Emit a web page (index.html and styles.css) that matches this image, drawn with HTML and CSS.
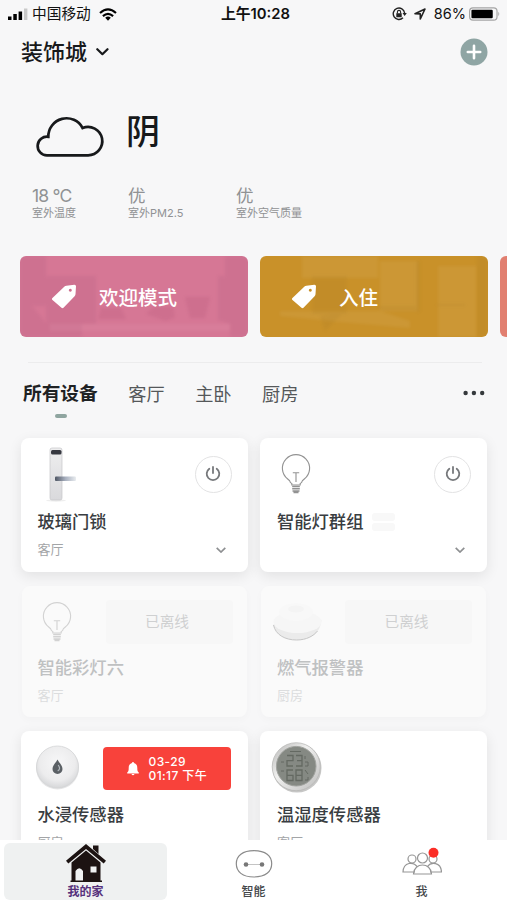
FILE: index.html
```html
<!DOCTYPE html>
<html lang="zh-CN">
<head>
<meta charset="utf-8">
<title>我的家</title>
<link rel="stylesheet" href="styles.css">
</head>
<body>
<svg width="0" height="0" class="defs">
  <defs>
    <linearGradient id="lockBody" x1="0" y1="0" x2="0" y2="1"><stop offset="0" stop-color="#eeeeef"/><stop offset="1" stop-color="#d9d9dc"/></linearGradient>
    <linearGradient id="handle"><stop offset="0" stop-color="#4e5563"/><stop offset=".5" stop-color="#a8b0bf"/><stop offset="1" stop-color="#e9ecef"/></linearGradient>
    <radialGradient id="puck" cx=".5" cy=".4" r=".6"><stop offset="0" stop-color="#f7f7f8"/><stop offset=".7" stop-color="#ececed"/><stop offset="1" stop-color="#d6d7d9"/></radialGradient>
    <linearGradient id="rim" x1="0" y1="0" x2="1" y2="1"><stop offset="0" stop-color="#b4b4b3"/><stop offset=".4" stop-color="#f0f0ef"/><stop offset="1" stop-color="#bdbdbc"/></linearGradient>
    <symbol id="tag" viewBox="0 0 26 26"><path fill="#fff" fill-rule="evenodd" d="M1.2 14.2 13.500 2.600Q14.300 2 15.400 1.800L23.300 .8Q25 .7 25 2.300L24.500 10.300Q24.400 11.500 23.600 12.300L12.500 23.800Q11.500 24.700 10.500 23.800L1.200 15.700Q.5 15 1.200 14.200ZM19.300 4.800a1.500 1.500 0 1 0 .01 0Z"/></symbol>
    <symbol id="power" viewBox="0 0 16 16"><path fill="none" stroke="#77797c" stroke-width="1.800" stroke-linecap="round" d="M4.300 2.700a6.300 6.300 0 1 0 7.400 0M8 1v6"/></symbol>
    <symbol id="chev" viewBox="0 0 10 6"><path fill="none" stroke="#8e9092" stroke-width="1.700" d="m.7 .8 4.300 4.200L9.300 .8"/></symbol>
    <symbol id="bulb" viewBox="0 0 30 40"><g fill="none" stroke="#929292" stroke-width="1.100"><path d="M10.800 31v-1.500c-.8-.5-1.800-1-1.800-2-.2-1-1.200-1.600-2.300-2.500A13.600 13.600 0 1 1 23.300 25c-1.100.9-2.100 1.500-2.300 2.500 0 1-1 1.500-1.800 2V31Z"/><path d="M15 28V18.800M11.800 18.800h6.400"/><path stroke-width="1.500" d="M11.200 32.500h7.600M11.200 34.800h7.600M11.500 36.900h7M12.500 38.600h5"/></g></symbol>
  </defs>
</svg>
<header class="status">
  <div class="left">
    <svg width="20" height="12" viewBox="0 0 20 12"><path d="M0 8.500h3.500V12H0zM5.300 6h3.500v6H5.300zM10.600 3.500h3.500V12h-3.500z"/><path fill="#c9c9c9" d="M16 .5h3.400V12H16z"/></svg>
    <span class="carrier">中国移动</span>
    <svg class="wifi" width="18" height="13" viewBox="0 0 18 13"><path fill="none" stroke="#000" stroke-width="2.100" d="M1 5.100q8-7.400 16 0M3.900 8.100q5.100-4.600 10.200 0"/><path d="m9 12.700-2.800-2.900q2.800-2.500 5.600 0z"/></svg>
  </div>
  <time class="time">上午10:28</time>
  <div class="right">
    <svg width="15" height="14" viewBox="0 0 15 14"><path fill="none" stroke="#222" stroke-width="1.400" d="M11 10.800A5.700 5.700 0 1 1 12.600 6"/><path fill="#222" d="M10.500 6h4.300l-2.100 3zM4.300 6.200h5.400v4H4.300z"/><path fill="none" stroke="#222" stroke-width="1.100" d="M5.400 6.500V5a1.600 1.600 0 0 1 3.200 0v1.500"/></svg>
    <svg class="loc" width="12" height="12" viewBox="0 0 12 12"><path fill="none" stroke="#222" stroke-width="1.600" stroke-linejoin="round" d="M1 5.700 11 1 6.300 11V5.900Z"/></svg>
    <span class="pct">86%</span>
    <svg width="32" height="14" viewBox="0 0 33 14"><rect x=".6" y=".6" width="28.300" height="12.800" rx="3.500" fill="none" stroke="#a5a5a5" stroke-width="1.200"/><rect x="2.500" y="2.500" width="22" height="9" rx="1.200"/><path fill="#a5a5a5" d="M30.200 4.700q2 2.300 0 4.600z"/></svg>
  </div>
</header>
<main class="content">
  <div class="home">
    <h1>装饰城</h1>
    <svg class="caret" width="13" height="8" viewBox="0 0 13 8"><path fill="none" stroke="#17191b" stroke-width="2.200" stroke-linecap="round" stroke-linejoin="round" d="m1.300 1.200 5.100 5 5.100-5"/></svg>
    <svg class="add" width="28" height="28" viewBox="0 0 28 28"><circle cx="14" cy="14" r="13.500" fill="#8fa5a4"/><path stroke="#fff" stroke-width="2.600" stroke-linecap="round" d="M14 7.800v12.400M7.800 14h12.400"/></svg>
  </div>
  <section class="weather">
    <svg width="70" height="44" viewBox="0 0 70 44"><path fill="none" stroke="#17191b" stroke-width="2.700" d="M12 40.300h41a14.200 14.200 0 1 0-5.400-27.300A18.200 18.200 0 0 0 13.300 21.800A9.300 9.300 0 1 0 12 40.300Z"/></svg>
    <strong>阴</strong>
  </section>
  <section class="stats">
    <div><b class="temp">18 °C</b><span>室外温度</span></div>
    <div><b>优</b><span>室外PM2.5</span></div>
    <div><b>优</b><span>室外空气质量</span></div>
  </section>
  <section class="scenes">
    <article class="scene pink">
      <svg class="photo" viewBox="0 0 228 81" preserveAspectRatio="none"><path fill="#94486b" fill-opacity=".11" d="M0 0h26v50H0zM26 20h50v48H26zM205 0h23v81h-18V68l-12-4V20h7zM0 50h12l15 18h35v13H0z"/><path fill="#9c3e65" fill-opacity=".13" d="m78 63 3-11h20l5 11zM126 58l7-7h20l2 10-9 4zM165 41h25l-5 21h-15z"/><path fill="#fff" fill-opacity=".05" d="M30 68h180v7H30z"/></svg>
      <svg class="tag"><use href="#tag"/></svg><span>欢迎模式</span>
    </article>
    <article class="scene gold">
      <svg class="photo" viewBox="0 0 228 81" preserveAspectRatio="none"><path fill="#fff" fill-opacity=".06" d="M42 0h76v22H42zM120 5h38v50h-38zM178 10h38v71h-38zM20 55h100l30 10v7L80 66l-60-6z"/><path fill="#71501a" fill-opacity=".07" d="M52 20h35v38H52zM156 5h4v51h-4zM117 50h38l4 4h-38zM217 0h11v81h-11zM60 60l25-5-20 20zM177 50h28v-2h-28z"/></svg>
      <svg class="tag"><use href="#tag"/></svg><span>入住</span>
    </article>
    <article class="scene coral"></article>
  </section>
  <nav class="rooms">
    <a class="on">所有设备</a><a>客厅</a><a>主卧</a><a>厨房</a>
    <svg class="more" width="22" height="6" viewBox="0 0 22 6"><g fill="#35393c"><circle cx="2.600" cy="3" r="2.200"/><circle cx="10.900" cy="3" r="2.200"/><circle cx="19.200" cy="3" r="2.200"/></g></svg>
  </nav>
  <section class="devices">
    <article class="card">
      <div class="top">
        <svg class="pic" width="54" height="60" viewBox="0 0 54 60"><ellipse cx="24" cy="56.500" rx="10" ry="1.200" fill="#eee"/><rect x="18" y="4" width="12" height="52" rx="2" fill="url(#lockBody)" stroke="#c5c5c8" stroke-width=".7"/><rect x="19" y="6" width="10.500" height="4.500" rx="1.500" fill="#363840"/><rect x="23" y="32.500" width="21" height="4.600" rx="1" fill="url(#handle)"/></svg>
        <div class="btn"><svg><use href="#power"/></svg></div>
      </div>
      <h2>玻璃门锁</h2>
      <p>客厅<svg class="chev"><use href="#chev"/></svg></p>
    </article>
    <article class="card">
      <div class="top">
        <svg class="pic bulb"><use href="#bulb"/></svg>
        <div class="btn"><svg><use href="#power"/></svg></div>
      </div>
      <h2>智能灯群组<svg class="group" width="23" height="18" viewBox="0 0 23 18"><rect width="23" height="8" rx="3" fill="#f8f8f8"/><rect y="10" width="23" height="8" rx="3" fill="#f8f8f8"/></svg></h2>
      <p><svg class="chev"><use href="#chev"/></svg></p>
    </article>
    <article class="card off">
      <div class="top">
        <svg class="pic bulb"><use href="#bulb"/></svg>
        <div class="state">已离线</div>
      </div>
      <h2>智能彩灯六</h2>
      <p>客厅</p>
    </article>
    <article class="card off">
      <div class="top">
        <svg class="pic" width="54" height="60" viewBox="0 0 54 60"><path fill="#ebebeb" d="M2.500 32c1 10 11 16 23 16s22-6 24-15l1-5z"/><path fill="none" stroke="#c6c6c6" stroke-width="1" d="M2.500 33c2 10 12 15 23 15 10 0 17-4 21-9"/><ellipse cx="26.500" cy="30" rx="24" ry="11" fill="#f6f6f6"/><ellipse cx="25" cy="20" rx="17" ry="9" fill="#f8f8f8"/><ellipse cx="25" cy="17" rx="8" ry="3.500" fill="#f4f4f4"/></svg>
        <div class="state">已离线</div>
      </div>
      <h2>燃气报警器</h2>
      <p>厨房</p>
    </article>
    <article class="card">
      <div class="top">
        <svg class="pic" width="54" height="60" viewBox="0 0 54 60"><circle cx="25.500" cy="31" r="21.500" fill="#e7e7e8"/><circle cx="25.500" cy="30" r="21" fill="url(#puck)" stroke="#d3d4d6" stroke-width=".8"/><path fill="#5b6065" d="M25.500 22.500c1.300 3 5 5.800 5 9.500a5 5 0 0 1-10 0c0-3.700 3.700-6.500 5-9.500Z"/><path stroke="#b3b9be" stroke-width="1.200" fill="none" d="M26.200 28q3 4-.5 6"/></svg>
        <div class="alarm">
          <svg width="12" height="14" viewBox="0 0 12 14"><path fill="#fff" d="M6 0a1 1 0 0 1 1 1.100C9.300 1.700 10.300 3.400 10.300 6c0 2.700.3 3.600 1.500 4.600v.9H.2v-.9C1.400 9.600 1.700 8.700 1.700 6c0-2.600 1-4.300 3.300-4.900A1 1 0 0 1 6 0M4.400 12h3.200q-1.600 2.400-3.200 0"/></svg>
          <span>03-29<br>01:17 下午</span>
        </div>
      </div>
      <h2>水浸传感器</h2>
      <p>厨房</p>
    </article>
    <article class="card">
      <div class="top">
        <svg class="pic" width="54" height="60" viewBox="0 0 54 60"><circle cx="26" cy="31" r="24.500" fill="#c7c7c6"/><circle cx="25.200" cy="29.700" r="24" fill="url(#rim)" stroke="#b4b4b3" stroke-width=".7"/><circle cx="25.200" cy="29.200" r="19.800" fill="#858983" stroke="#a1a39f" stroke-width="1"/><g fill="none" stroke="#646962" stroke-width="1.300"><path d="M16 18.500h6v5.200h-6V29h6M25 18.500h6V29h-6M26 23.700h5M22 33h-6v10.500h6v-5.200h-6M25 33h6v10.500h-6zM25 38.300h6"/><path stroke-width="1" d="M19 14.500h11M10 25h3M10 34h3M34 19v3M34 25h3v4h-3M34 33l3 4M34 43h3v-3"/></g></svg>
      </div>
      <h2>温湿度传感器</h2>
      <p>客厅</p>
    </article>
  </section>
</main>
<footer class="tabs">
  <a class="tab on">
    <svg width="40" height="40" viewBox="0 0 40 40"><path fill="#1c1312" d="M27 2.500h5.500V11l-5.500-5zM20 1 40 17.800 37.700 20.500 20 6 2.300 20.500 0 17.800z"/><path fill="#1c1312" fill-rule="evenodd" d="M20 7.500 34.500 19.500v18H36V39H4.500v-1.500h1v-18zM9.500 37.500H17V28q-3.700-5.500-7.500 0zM24.500 23.500v6h6v-6z"/></svg>
    <span>我的家</span>
  </a>
  <a class="tab">
    <svg width="40" height="40" viewBox="0 0 40 40"><path d="M20 7.700C31.500 7.700 37.700 13 37.700 20.800S31.500 34 20 34 2.300 28.700 2.300 20.800 8.500 7.700 20 7.700Z" fill="none" stroke="#8b8b8b" stroke-width="1.200"/><path stroke="#c4c4c4" d="M12 21.500h16"/><circle cx="12" cy="21.500" r="2.300" fill="#777"/><circle cx="28" cy="21.500" r="2.300" fill="#777"/></svg>
    <span>智能</span>
  </a>
  <a class="tab">
    <svg width="40" height="40" viewBox="0 0 40 40"><g fill="none" stroke="#969696" stroke-width="1.200"><circle cx="10" cy="16" r="4"/><circle cx="20.500" cy="15" r="5"/><circle cx="31" cy="16" r="4"/><path d="M13 29H1c.5-10.500 10.500-10.500 14.500-5M25.500 23.500C29 18.500 39 19 39.500 29H28M11.500 31c.5-12 17.500-12 18 0Z"/></g><circle cx="31.500" cy="9.800" r="5" fill="#fb2d26"/></svg>
    <span>我</span>
  </a>
</footer>
</body>
</html>
```

FILE: styles.css
```css
* { box-sizing: border-box; }
body {
  margin: 0;
  height: 900px;
  overflow: hidden;
  display: flex;
  flex-direction: column;
  background: #f7f7f8;
  color: #17191b;
  font-family: Inter, "Noto Sans CJK SC", sans-serif;
}
h1, h2, p { margin: 0; font-weight: 500; }
svg { display: block; flex: none; }
.defs { position: absolute; }

.status {
  height: 28px;
  flex: none;
  display: grid;
  grid-template-columns: 1fr auto 1fr;
  align-items: center;
  padding: 0 6px 0 8px;
  color: #111;
  line-height: 28px;
}
.left, .right { display: flex; align-items: center; }
.right { justify-content: flex-end; }
.carrier { font-size: 14.700px; margin-left: 4px; }
.wifi { margin-left: 8px; }
.time { font-size: 14.800px; font-weight: 600; padding-left: 2px; }
.loc { margin-left: 7px; }
.pct { font-size: 14.500px; margin: 0 3px 0 8px; }

.content { flex: 1; min-height: 0; overflow: hidden; }
.home { height: 48px; display: flex; align-items: center; padding: 0 19px 0 21px; }
.home h1 { font-size: 22px; line-height: 50px; }
.caret { margin-left: 9px; }
.add { margin-left: auto; }

.weather { height: 110px; display: flex; align-items: center; padding: 0 0 0 35px; }
.weather strong { font-size: 34px; font-weight: 500; margin: 2px 0 0 21px; line-height: 108px; }
.weather svg { margin-top: 11px; }

.stats { height: 70px; display: flex; padding-left: 32px; color: #909294; }
.stats div { width: 96px; }
.stats div:nth-child(2) { width: 108px; }
.stats b, .stats span { display: block; white-space: nowrap; }
.stats b { font-size: 17.500px; line-height: 20px; font-weight: 400; }
.stats .temp { letter-spacing: -.8px; }
.stats span { font-size: 11px; line-height: 14px; }

.scenes { display: flex; gap: 12px; padding-left: 20px; }
.scene {
  position: relative;
  flex: none;
  width: 228px;
  height: 81px;
  border-radius: 6px;
  overflow: hidden;
  display: flex;
  align-items: center;
  padding-left: 31px;
  color: #fff;
  font-size: 19.500px;
  font-weight: 500;
}
.photo { position: absolute; inset: 0; width: 100%; height: 100%; filter: blur(1.500px); }
.tag { position: relative; width: 26px; height: 26px; }
.scene span { position: relative; margin-left: 22px; }
.pink { background: #d67795; }
.gold { background: #c99129; }
.coral { background: #e17f70; }

.rooms {
  height: 76px;
  margin: 25px 25px 0 23px;
  display: flex;
  gap: 30.500px;
  position: relative;
  background: linear-gradient(#ececed, #ececed) 5px 0 / 454px 1px no-repeat;
  font-size: 18.200px;
  line-height: 64px;
  color: #55585a;
}
.rooms a { flex: none; }
.rooms .on { position: relative; font-size: 18.700px; font-weight: 700; color: #1f2224; }
.rooms .on::after {
  content: "";
  position: absolute;
  left: 32px;
  top: 52px;
  width: 12px;
  height: 4px;
  border-radius: 2px;
  background: #8fa5a0;
}
.more { margin: 28px -3px 0 auto; }

.devices {
  display: grid;
  grid-template-columns: 227px 227px;
  grid-template-rows: 134px 131px 134px;
  gap: 14px 12.500px;
  padding: 0 20px 0 20.500px;
  height: 480px;
}
.card {
  border-radius: 8px;
  background: #fff;
  box-shadow: 0 4px 14px rgba(0, 0, 0, .09);
  padding: 5px 16px 0 17px;
}
.top { height: 62px; display: flex; align-items: center; justify-content: space-between; }
.pic { margin-left: -6px; }
.bulb { width: 30px; height: 40px; margin-left: 4px; }
.btn {
  width: 37px;
  height: 37px;
  border-radius: 50%;
  border: 1.500px solid #e3e3e4;
  display: flex;
  align-items: center;
  justify-content: center;
}
.btn svg { width: 16px; height: 16px; }
.card h2 { display: flex; align-items: center; height: 30px; margin-top: 2px; font-size: 17.300px; line-height: 30px; color: #393d41; }
.group { margin-left: 9px; }
.card p { display: flex; align-items: center; height: 26px; margin-top: -2px; font-size: 13px; font-weight: 400; color: #a3a5a7; }
.chev { width: 10px; height: 6px; margin: 3px 6px 0 auto; }

.off { background: #fafafa; margin: 0 1px; padding: 5px 14px 0 16px; box-shadow: 0 3px 8px rgba(0, 0, 0, .025); }
.off .bulb { opacity: .38; }
.off h2 { color: #bfc1c2; margin-top: 0; }
.off p { color: #dcddde; }
.state {
  width: 127px;
  height: 44px;
  border-radius: 4px;
  background: #f7f7f7;
  color: #cfd0d1;
  font-size: 14.700px;
  line-height: 44px;
  text-align: center;
  padding-right: 4px;
}

.alarm {
  width: 128px;
  height: 43px;
  margin: 3px 1px 0 0;
  border-radius: 4px;
  background: #f8423b;
  color: #fff;
  display: flex;
  align-items: center;
  gap: 10px;
  padding-left: 24px;
  font-size: 12px;
  line-height: 14px;
  font-weight: 500;
  letter-spacing: .4px;
}
.alarm span { white-space: nowrap; padding-top: 1px; }

.tabs {
  height: 60px;
  flex: none;
  position: relative;
  display: grid;
  grid-template-columns: 163px 163px 163px;
  gap: 5px;
  padding: 3px 0 2px 4px;
  background: #fff;
}
.tab {
  display: flex;
  flex-direction: column;
  align-items: center;
  border-radius: 6px;
  font-size: 12px;
  line-height: 16px;
  font-weight: 500;
  color: #44474a;
}
.tab span { margin-top: 1px; }
.tab.on { background: #eff1f1; color: #55307b; font-weight: 700; }
```
